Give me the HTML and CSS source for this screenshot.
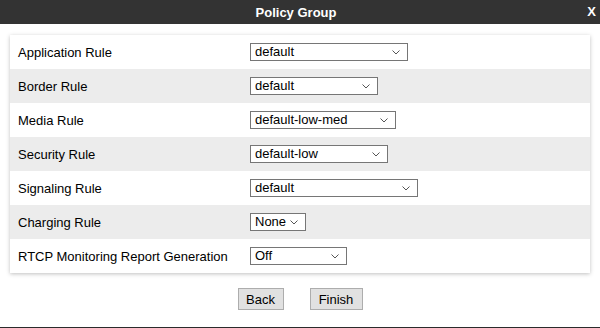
FILE: index.html
```html
<!DOCTYPE html>
<html lang="en">
<head>
    <meta charset="UTF-8">
    <meta name="viewport" content="width=device-width, initial-scale=1.0">
    <title>Policy Group</title>
    <link rel="stylesheet" href="styles.css">
</head>
<body>
    <div class="dialog">
        <div class="dialog-header">
            <span class="dialog-title">Policy Group</span>
            <span class="dialog-close">X</span>
        </div>

        <div class="dialog-body">
            <div class="policy-table">
                <div class="row">
                    <label class="row-label">Application Rule</label>
                    <div class="select-wrap w-app">
                        <select><option>default</option></select>
                        <svg class="chevron" viewBox="0 0 8 5"><path d="M0.5 0.5 L4 4 L7.5 0.5"/></svg>
                    </div>
                </div>
                <div class="row alt">
                    <label class="row-label">Border Rule</label>
                    <div class="select-wrap w-border">
                        <select><option>default</option></select>
                        <svg class="chevron" viewBox="0 0 8 5"><path d="M0.5 0.5 L4 4 L7.5 0.5"/></svg>
                    </div>
                </div>
                <div class="row">
                    <label class="row-label">Media Rule</label>
                    <div class="select-wrap w-media">
                        <select><option>default-low-med</option></select>
                        <svg class="chevron" viewBox="0 0 8 5"><path d="M0.5 0.5 L4 4 L7.5 0.5"/></svg>
                    </div>
                </div>
                <div class="row alt">
                    <label class="row-label">Security Rule</label>
                    <div class="select-wrap w-security">
                        <select><option>default-low</option></select>
                        <svg class="chevron" viewBox="0 0 8 5"><path d="M0.5 0.5 L4 4 L7.5 0.5"/></svg>
                    </div>
                </div>
                <div class="row">
                    <label class="row-label">Signaling Rule</label>
                    <div class="select-wrap w-signaling">
                        <select><option>default</option></select>
                        <svg class="chevron" viewBox="0 0 8 5"><path d="M0.5 0.5 L4 4 L7.5 0.5"/></svg>
                    </div>
                </div>
                <div class="row alt">
                    <label class="row-label">Charging Rule</label>
                    <div class="select-wrap w-charging">
                        <select><option>None</option></select>
                        <svg class="chevron" viewBox="0 0 8 5"><path d="M0.5 0.5 L4 4 L7.5 0.5"/></svg>
                    </div>
                </div>
                <div class="row">
                    <label class="row-label">RTCP Monitoring Report Generation</label>
                    <div class="select-wrap w-rtcp">
                        <select><option>Off</option></select>
                        <svg class="chevron" viewBox="0 0 8 5"><path d="M0.5 0.5 L4 4 L7.5 0.5"/></svg>
                    </div>
                </div>
            </div>

            <div class="actions">
                <button class="btn btn-back">Back</button>
                <button class="btn btn-finish">Finish</button>
            </div>
        </div>
    </div>
</body>
</html>
```

FILE: styles.css
```css
/* Policy Group dialog */
body {
    margin: 0;
    padding: 0;
    background-color: #fff;
    font-family: 'Liberation Sans', Arial, sans-serif;
    font-size: 13px;
    color: #000;
}

.dialog {
    width: 600px;
    height: 328px;
    box-sizing: border-box;
    border-bottom: 1px solid #2b2b2b;
    display: flex;
    flex-direction: column;
}

.dialog-header {
    height: 24px;
    background-color: #333;
    color: #fff;
    position: relative;
    display: flex;
    justify-content: center;
    align-items: center;
}

.dialog-title {
    font-weight: bold;
    font-size: 13px;
    margin-left: -8px;
}

.dialog-close {
    position: absolute;
    right: 4px;
    top: 4px;
    font-weight: bold;
    font-size: 13px;
}

.dialog-body {
    padding: 11px 10px 0 10px;
}

.policy-table {
    background-color: #fff;
    box-shadow: 0 1px 4px rgba(0, 0, 0, 0.25);
}

.row {
    height: 34px;
    display: grid;
    grid-template-columns: 240px 1fr;
    align-items: center;
}

.row.alt {
    background-color: #ececec;
}

.row-label {
    padding-left: 8px;
}

.select-wrap {
    position: relative;
    height: 18px;
}

.select-wrap select {
    appearance: none;
    -webkit-appearance: none;
    width: 100%;
    height: 18px;
    box-sizing: border-box;
    margin: 0;
    padding: 0 0 0 4px;
    border: 1px solid #767676;
    border-radius: 0;
    background-color: #fff;
    font-family: 'Liberation Sans', Arial, sans-serif;
    font-size: 13px;
    color: #000;
    line-height: 16px;
}

.chevron {
    position: absolute;
    right: 8px;
    top: 7px;
    width: 8px;
    height: 5px;
    fill: none;
    stroke: #555;
    stroke-width: 1;
    pointer-events: none;
}

.w-app { width: 158px; }
.w-border { width: 128px; }
.w-media { width: 146px; }
.w-security { width: 138px; }
.w-signaling { width: 168px; }
.w-charging { width: 56px; }
.w-rtcp { width: 97px; }

.actions {
    display: flex;
    justify-content: center;
    gap: 26px;
    margin-top: 15px;
}

.btn {
    height: 22px;
    box-sizing: border-box;
    margin: 0;
    padding: 0;
    border: 1px solid #adadad;
    border-radius: 0;
    background-color: #e1e1e1;
    font-family: 'Liberation Sans', Arial, sans-serif;
    font-size: 13px;
    color: #000;
    cursor: pointer;
}

.btn-back { width: 46px; }
.btn-finish { width: 53px; }

.btn:hover {
    background-color: #e5f1fb;
    border-color: #0078d7;
}
```
